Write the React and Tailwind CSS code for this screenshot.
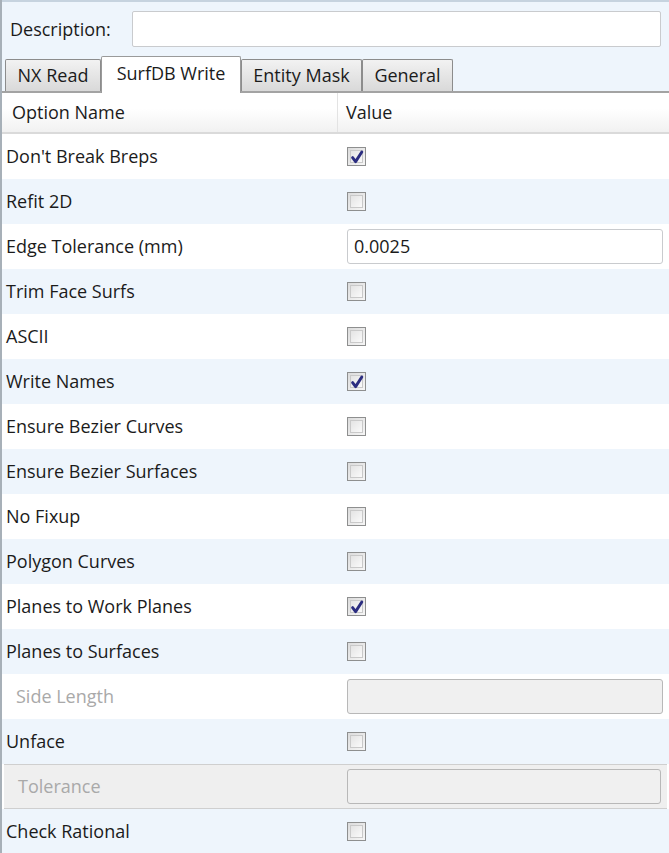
const ROWS = [
  { name: "Don't Break Breps", type: 'check', checked: true },
  { name: 'Refit 2D', type: 'check' },
  { name: 'Edge Tolerance (mm)', type: 'text', value: '0.0025' },
  { name: 'Trim Face Surfs', type: 'check' },
  { name: 'ASCII', type: 'check' },
  { name: 'Write Names', type: 'check', checked: true },
  { name: 'Ensure Bezier Curves', type: 'check' },
  { name: 'Ensure Bezier Surfaces', type: 'check' },
  { name: 'No Fixup', type: 'check' },
  { name: 'Polygon Curves', type: 'check' },
  { name: 'Planes to Work Planes', type: 'check', checked: true },
  { name: 'Planes to Surfaces', type: 'check' },
  { name: 'Side Length', type: 'text', disabled: true },
  { name: 'Unface', type: 'check' },
  { name: 'Tolerance', type: 'text', disabled: true, selected: true },
  { name: 'Check Rational', type: 'check' },
]

const TABS = [
  { label: 'NX Read', w: 'w-[96px]' },
  { label: 'SurfDB Write', w: 'w-[140px]', active: true },
  { label: 'Entity Mask', w: 'w-[121px]' },
  { label: 'General', w: 'w-[91px]' },
]

function CheckBox({ checked }) {
  return (
    <div className="w-[19px] h-[19px] border border-[#8e8f8f] bg-gradient-to-br from-[#dcdcdc] to-[#f6f6f6] p-[2px] relative">
      <div className="w-full h-full border border-[#c9c9c9] bg-gradient-to-br from-[#e4e4e4] to-[#fafafa]" />
      {checked && (
        <svg className="absolute left-[1px] top-[1px]" width="16" height="16" viewBox="0 0 16 16">
          <path d="M3.6 8.6 L6.6 12.6 L12.8 3" fill="none" stroke="#2b2d80" strokeWidth="2.9" strokeLinecap="round" strokeLinejoin="round" />
        </svg>
      )}
    </div>
  )
}

export default function App() {
  return (
    <div className="w-[669px] h-[853px] overflow-hidden bg-white border-l-2 border-[#a7b0b8] font-['Open_Sans',sans-serif] text-[#1b1b1b]">
      {/* Description + tabs */}
      <div className="bg-[#eef5fc] border-t-2 border-[#c6d3df]">
        <div className="h-[54px] flex items-center pl-[8px]">
          <span className="text-[18px] w-[122px]">Description:</span>
          <div className="w-[529px] h-[36px] bg-white border border-[#c9cbce] rounded-[2px]" />
        </div>
        <div className="h-[37px] flex items-end pl-[3px] border-b-2 border-[#a3a3a3]">
          {TABS.map((t) =>
            t.active ? (
              <div
                key={t.label}
                className={`${t.w} h-[37px] -mb-[2px] bg-white border border-b-0 border-[#9a9a9a] flex items-center justify-center text-[18px] pb-[3px] rounded-t-[2px]`}
              >
                {t.label}
              </div>
            ) : (
              <div
                key={t.label}
                className={`${t.w} h-[32px] bg-gradient-to-b from-[#f2f2f2] to-[#d9d9d9] border border-b-0 border-[#8c8c8c] flex items-center justify-center text-[18px] rounded-t-[2px]`}
              >
                {t.label}
              </div>
            )
          )}
        </div>
      </div>

      {/* Header */}
      <div className="h-[41px] flex bg-gradient-to-b from-white from-40% to-[#f1f1f1] border-b-2 border-[#dadada]">
        <div className="w-[336px] pl-[10px] flex items-center text-[18px] border-r border-[#e3e3e3]">Option Name</div>
        <div className="flex-1 pl-[8px] flex items-center text-[18px]">Value</div>
      </div>

      {/* Rows */}
      {ROWS.map((r, i) => (
        <div
          key={r.name}
          className={`h-[45px] flex items-center ${
            r.selected
              ? 'bg-[#efefef] border-y border-[#cfcfcf] ml-[2px] mr-[2px]'
              : i % 2 === 1
              ? 'bg-[#eef5fc]'
              : 'bg-white'
          }`}
        >
          <div
            className={`${r.selected ? 'w-[335px]' : 'w-[337px]'} ${r.disabled ? 'pl-[14px] text-[#a9a9a9]' : 'pl-[4px]'} text-[18px] whitespace-nowrap`}
          >
            {r.name}
          </div>
          <div className="flex-1 pl-[8px] pr-[6px]">
            {r.type === 'check' ? (
              <CheckBox checked={r.checked} />
            ) : (
              <div
                className={`h-[35px] rounded-[3px] border flex items-center px-[6px] text-[18px] ${
                  r.disabled ? 'bg-[#f0f0f0] border-[#b8b8b8]' : 'bg-white border-[#c9cbce]'
                }`}
              >
                {r.value}
              </div>
            )}
          </div>
        </div>
      ))}
    </div>
  )
}
